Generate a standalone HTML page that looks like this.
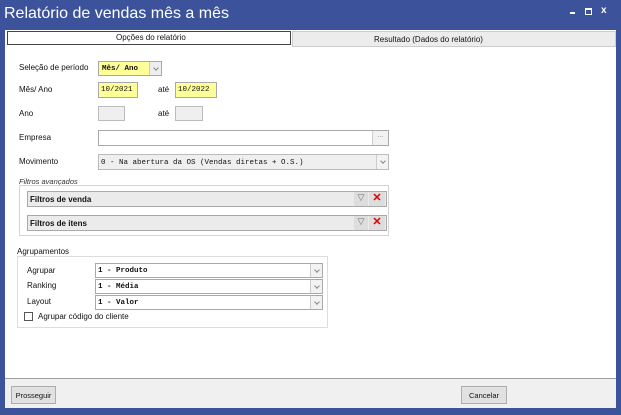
<!DOCTYPE html>
<html><head><meta charset="utf-8"><style>
*{margin:0;padding:0;box-sizing:border-box}
body{width:621px;height:415px;background:#3c539b;position:relative;overflow:hidden;font-family:"Liberation Sans",sans-serif;font-size:8px;color:#111}
div,span{position:absolute}
.t{white-space:nowrap}
.mono{font-family:"Liberation Mono",monospace;font-size:7.5px;font-weight:bold}
.in{border:1px solid #a9a9a9;background:#fff}
.y{background:#ffff99}
.g{background:#efefef;border-color:#bbb}
.dd{right:0;top:0;bottom:0;width:12px;border-left:1px solid #ccc;background:#f2f2f2}
.dd::after{content:"";position:absolute;left:4px;top:4px;width:3px;height:3px;border-right:1px solid #888;border-bottom:1px solid #888;transform:rotate(45deg)}
.btn{background:#e1e1e1;border:1px solid #adadad;display:flex;align-items:center;justify-content:center}
</style></head><body>
<span class="t" style="left:4px;top:5px;font-size:16px;color:#fff">Relatório de vendas mês a mês</span>
<span style="left:570px;top:12px;width:5px;height:2px;background:#fff"></span>
<span style="left:585px;top:8px;width:7px;height:7px;border:1.5px solid #fff;border-top-width:2px"></span>
<span class="t" style="left:601px;top:5px;color:#fff;font-size:10px;font-weight:bold">x</span>
<div style="left:5px;top:30px;width:611px;height:378px;background:#fff"></div>
<div style="left:5px;top:378px;width:611px;height:30px;background:#f0f0f0;border-top:1px solid #a0a0a0"></div>
<div style="left:292px;top:31px;width:324px;height:16px;background:#ececec;border:1px solid #ccc"></div>
<span class="t" style="left:374px;top:35px">Resultado (Dados do relatório)</span>
<div style="left:7px;top:31px;width:284px;height:14px;background:#fff;border:1px solid #444"></div>
<span class="t" style="left:116px;top:33px">Opções do relatório</span>

<span class="t" style="left:19px;top:63px">Seleção de período</span>
<div class="in y" style="left:98px;top:61px;width:64px;height:15px"><span class="mono" style="left:3px;top:3px">Mês/ Ano</span><div class="dd" style="background:#eee"></div></div>
<span class="t" style="left:19px;top:85px">Mês/ Ano</span>
<div class="in y" style="left:98px;top:82px;width:40px;height:16px"><span class="mono" style="left:2px;top:3px;font-weight:normal">10/2021</span></div>
<span class="t" style="left:158px;top:85px">até</span>
<div class="in y" style="left:175px;top:82px;width:42px;height:16px"><span class="mono" style="left:2px;top:3px;font-weight:normal">10/2022</span></div>
<span class="t" style="left:19px;top:109px">Ano</span>
<div class="in g" style="left:98px;top:106px;width:27px;height:15px"></div>
<span class="t" style="left:158px;top:109px">até</span>
<div class="in g" style="left:175px;top:106px;width:28px;height:15px"></div>

<span class="t" style="left:19px;top:133px">Empresa</span>
<div class="in" style="left:98px;top:130px;width:291px;height:16px"><div style="right:0;top:0;bottom:0;width:16px;border-left:1px solid #ccc;background:#f2f2f2;color:#888;font-size:7px;text-align:center;line-height:10px">...</div></div>
<span class="t" style="left:19px;top:157px">Movimento</span>
<div class="in g" style="left:98px;top:154px;width:291px;height:16px"><span class="mono" style="left:2px;top:4px;font-weight:normal">0 - Na abertura da OS (Vendas diretas + O.S.)</span><div class="dd"></div></div>

<span class="t" style="left:19px;top:177px;font-style:italic;font-size:7.5px;text-decoration:underline;color:#333">Filtros avançados</span>
<div style="left:19px;top:185px;width:370px;height:51px;border:1px solid #d4d4d4"></div>
<div style="left:27px;top:191px;width:360px;height:16px;background:#ebebeb;border:1px solid #aaa"><span class="t" style="left:2px;top:3px;font-weight:bold">Filtros de venda</span></div>
<div style="left:27px;top:215px;width:360px;height:16px;background:#ebebeb;border:1px solid #aaa"><span class="t" style="left:2px;top:3px;font-weight:bold">Filtros de itens</span></div>
<div style="left:354px;top:192px;width:14px;height:14px;background:#ddd;color:#777;font-size:9px;text-align:center">▽</div>
<div style="left:369px;top:192px;width:16px;height:14px;background:#ddd;color:#d00;font-weight:bold;font-size:11px;text-align:center;line-height:13px">✕</div>
<div style="left:354px;top:216px;width:14px;height:14px;background:#ddd;color:#777;font-size:9px;text-align:center">▽</div>
<div style="left:369px;top:216px;width:16px;height:14px;background:#ddd;color:#d00;font-weight:bold;font-size:11px;text-align:center;line-height:13px">✕</div>

<span class="t" style="left:17px;top:247px;font-size:8px">Agrupamentos</span>
<div style="left:17px;top:256px;width:311px;height:72px;border:1px solid #ddd"></div>
<span class="t" style="left:27px;top:266px">Agrupar</span>
<span class="t" style="left:27px;top:281px">Ranking</span>
<span class="t" style="left:27px;top:297px">Layout</span>
<div class="in" style="left:95px;top:263px;width:228px;height:15px"><span class="mono" style="left:2px;top:3px">1 - Produto</span><div class="dd"></div></div>
<div class="in" style="left:95px;top:279px;width:228px;height:15px"><span class="mono" style="left:2px;top:3px">1 - Média</span><div class="dd"></div></div>
<div class="in" style="left:95px;top:295px;width:228px;height:15px"><span class="mono" style="left:2px;top:3px">1 - Valor</span><div class="dd"></div></div>
<div style="left:24px;top:312px;width:9px;height:9px;border:1px solid #555;background:#fff"></div>
<span class="t" style="left:38px;top:312px">Agrupar código do cliente</span>

<div class="btn" style="left:11px;top:386px;width:45px;height:18px"><span class="t" style="position:static;font-size:7.5px">Prosseguir</span></div>
<div class="btn" style="left:461px;top:386px;width:46px;height:18px"><span class="t" style="position:static;font-size:7.5px">Cancelar</span></div>
</body></html>
